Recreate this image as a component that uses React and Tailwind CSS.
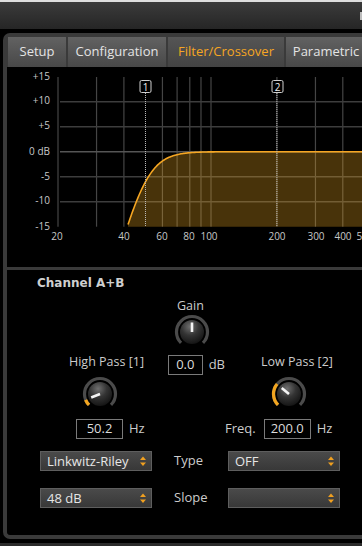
import React from 'react';

// Log frequency axis: 20 Hz at x=58, 218.9 px per decade
const fx = (f) => 58 + 218.9 * Math.log10(f / 20);
const dy = (db) => 151.7 - db * 5;
const GRID_BOTTOM = 226.7;

const buildCurve = () => {
  const pts = [];
  for (let x = 110; x <= 362; x += 1) {
    const f = 20 * Math.pow(10, (x - 58) / 218.9);
    const mag = 1 / (1 + Math.pow(50.2 / f, 8));
    const y = dy(20 * Math.log10(mag));
    if (y <= GRID_BOTTOM) pts.push([x, y]);
  }
  const line = pts.map(([x, y]) => `${x},${y.toFixed(2)}`).join(' ');
  const first = pts[0];
  const area = `${first[0]},${GRID_BOTTOM} ${line} 362,${GRID_BOTTOM}`;
  return { line, area };
};

const Graph = () => {
  const { line, area } = buildCurve();
  const freqs = [20, 30, 40, 60, 70, 80, 90, 100, 200, 300, 400];
  const dbLines = [10, 5, 0, -5, -10];
  const yLabels = [
    ['+15', 80], ['+10', 104], ['+5', 129], ['0 dB', 155], ['-5', 180], ['-10', 204], ['-15', 230],
  ];
  const xLabels = [
    ['20', 57], ['40', 124], ['60', 162], ['80', 189], ['100', 209], ['200', 277], ['300', 316], ['400', 343], ['500', 365],
  ];
  return (
    <svg width="355" height="200" viewBox="7 67 355 200" className="block">
      {freqs.map((f) => (
        <line key={f} x1={fx(f)} x2={fx(f)} y1="77" y2={GRID_BOTTOM} stroke="#454545" strokeWidth="1.2" />
      ))}
      {dbLines.map((d) => (
        <line key={d} x1="60" x2="362" y1={dy(d)} y2={dy(d)} stroke={d === 0 ? '#555' : '#3d3d3d'} strokeWidth="1.6" />
      ))}
      <polygon points={area} fill="#f0a820" fillOpacity="0.3" />
      <polyline points={line} fill="none" stroke="#f5a623" strokeWidth="1.6" />

      {/* crossover markers */}
      <line x1={fx(50.2)} x2={fx(50.2)} y1="93" y2={GRID_BOTTOM} stroke="#bbb" strokeWidth="1" strokeDasharray="1 1" />
      <rect x="140" y="80.5" width="11" height="12" rx="1.5" fill="#000" stroke="#cfcfcf" strokeWidth="1" />
      <text x="145.5" y="90.5" textAnchor="middle" fontSize="10" fill="#eee" fontFamily="'Open Sans', sans-serif">1</text>
      <line x1={fx(200)} x2={fx(200)} y1="93" y2={GRID_BOTTOM} stroke="#bbb" strokeWidth="1" strokeDasharray="1 1" />
      <rect x="272" y="80.5" width="11" height="12" rx="1.5" fill="#000" stroke="#cfcfcf" strokeWidth="1" />
      <text x="277.5" y="90.5" textAnchor="middle" fontSize="10" fill="#eee" fontFamily="'Open Sans', sans-serif">2</text>

      {yLabels.map(([t, y]) => (
        <text key={t} x="50" y={y} textAnchor="end" fontSize="10" fill="#c8c8c8" fontFamily="'Open Sans', sans-serif">{t}</text>
      ))}
      {xLabels.map(([t, x]) => (
        <text key={t} x={x} y="240" textAnchor="middle" fontSize="10" fill="#c8c8c8" fontFamily="'Open Sans', sans-serif">{t}</text>
      ))}
    </svg>
  );
};

const polar = (r, deg) => [18 + r * Math.cos((deg * Math.PI) / 180), 18 + r * Math.sin((deg * Math.PI) / 180)];
const arc = (r, a0, a1) => {
  const [x0, y0] = polar(r, a0);
  const [x1, y1] = polar(r, a1);
  return `M${x0} ${y0} A${r} ${r} 0 ${a1 - a0 > 180 ? 1 : 0} 1 ${x1} ${y1}`;
};

const Knob = ({ id, angle, showArc = true }) => {
  const [ax, ay] = polar(0, angle);
  const [bx, by] = polar(9.5, angle);
  return (
    <svg width="36" height="36" viewBox="0 0 36 36" className="block">
      <defs>
        <radialGradient id={id} cx="42%" cy="28%" r="80%">
          <stop offset="0" stopColor="#707070" />
          <stop offset="0.45" stopColor="#343434" />
          <stop offset="1" stopColor="#0e0e0e" />
        </radialGradient>
      </defs>
      <path d={arc(15.5, 135, 405)} stroke="#4b4b4b" strokeWidth="3.2" fill="none" />
      {showArc && <path d={arc(15.5, 135, angle)} stroke="#f2a51f" strokeWidth="3.2" fill="none" />}
      <circle cx="18" cy="18" r="12" fill={`url(#${id})`} />
      <line x1={ax} y1={ay} x2={bx} y2={by} stroke="#f4f4f4" strokeWidth="2.6" />
    </svg>
  );
};

const ValueBox = ({ children, className = '' }) => (
  <div className={`w-[47px] h-[20px] border border-[#7a7a7a] text-center text-[13px] leading-[17px] text-[#dcdcdc] ${className}`}>
    {children}
  </div>
);

const Arrows = () => (
  <svg width="6" height="11" viewBox="0 0 6 11" className="block">
    <polygon points="0,4 3,0.5 6,4" fill="#f0a020" />
    <polygon points="0,6.5 6,6.5 3,10" fill="#f0a020" />
  </svg>
);

const Select = ({ value }) => (
  <div className="h-[20px] flex items-center justify-between pl-[6px] pr-[5px] border border-[#5e5e5e] bg-gradient-to-b from-[#4a4a4a] to-[#383838] text-[13px] leading-none text-[#e6e6e6]">
    <span>{value}</span>
    <Arrows />
  </div>
);

const tabs = [
  ['Setup', 'w-[58px]'],
  ['Configuration', 'w-[98px]'],
  ['Filter/Crossover', 'w-[116px]'],
  ['Parametric', 'w-[80px]'],
];

export default function App() {
  return (
    <div className="w-[362px] h-[546px] bg-black overflow-hidden font-['Open_Sans',sans-serif]">
      <div className="h-[2px] bg-[#dedede]" />
      <div className="h-[27px] bg-gradient-to-b from-[#3b3b3b] to-[#262626] flex items-center justify-end">
        <div className="w-[2px] h-[8px] bg-[#bdbdbd]" />
      </div>
      <div className="h-[4px]" />

      <div className="ml-[3px] h-[506px] border-l-4 border-t-4 border-b-4 border-[#3a3a3a] rounded-tl-[7px] rounded-bl-[7px] flex flex-col">
        {/* tabs */}
        <div className="flex gap-[2px] pl-[1px] bg-[#3a3a3a] whitespace-nowrap">
          {tabs.map(([t, w]) => {
            const active = t === 'Filter/Crossover';
            return (
              <div
                key={t}
                className={`${w} shrink-0 h-[30px] flex items-center justify-center text-[13px] ${
                  active
                    ? 'bg-gradient-to-b from-[#555555] to-[#434343] text-[#f5a623]'
                    : 'bg-gradient-to-b from-[#626262] to-[#484848] text-[#e4e4e4]'
                }`}
              >
                {t}
              </div>
            );
          })}
        </div>

        <Graph />
        <div className="h-[3px] bg-[#3a3a3a]" />

        {/* channel controls */}
        <div className="pt-[6px]">
          <div className="pl-[30px] h-[15px] leading-[15px] font-['DejaVu_Sans',sans-serif] font-bold text-[12px] text-[#cfcfcf]">
            Channel A+B
          </div>

          <div className="mt-[7px] flex items-start text-[#cccccc]">
            <div className="ml-[62px] w-[98px] mt-[56px] flex flex-col">
              <div className="h-[16px] leading-[16px] text-[12.5px] whitespace-nowrap">High Pass [1]</div>
              <div className="ml-[13px] mt-[6px]">
                <Knob id="kHp" angle={158} />
              </div>
              <div className="mt-[7px] ml-[7px] flex items-center gap-[6px]">
                <ValueBox>50.2</ValueBox>
                <span className="text-[13px]">Hz</span>
              </div>
            </div>

            <div className="w-[58px] flex flex-col">
              <div className="ml-[10px] h-[16px] leading-[16px] text-[12.5px]">Gain</div>
              <div className="ml-[7px]">
                <Knob id="kGain" angle={270} showArc={false} />
              </div>
              <div className="mt-[5px] ml-[1px] flex items-center gap-[6px] whitespace-nowrap">
                <ValueBox>0.0</ValueBox>
                <span className="text-[13px]">dB</span>
              </div>
            </div>

            <div className="mt-[56px] flex flex-col">
              <div className="ml-[36px] h-[16px] leading-[16px] text-[12.5px] whitespace-nowrap">Low Pass [2]</div>
              <div className="ml-[46px] mt-[6px]">
                <Knob id="kLp" angle={220} />
              </div>
              <div className="mt-[7px] flex items-center whitespace-nowrap">
                <span className="text-[13px]">Freq.</span>
                <ValueBox className="ml-[8px]">200.0</ValueBox>
                <span className="ml-[6px] text-[13px]">Hz</span>
              </div>
            </div>
          </div>

          <div className="mt-[12px] pl-[33px] grid grid-cols-[112px_76px_112px] gap-y-[17px] items-center text-[#cccccc]">
            <Select value="Linkwitz-Riley" />
            <span className="pl-[22px] text-[13px]">Type</span>
            <Select value="OFF" />
            <Select value="48 dB" />
            <span className="pl-[22px] text-[13px]">Slope</span>
            <Select value="" />
          </div>
        </div>
      </div>
      <div className="mt-[4px] h-[3px] bg-[#2b2b2b]" />
    </div>
  );
}
